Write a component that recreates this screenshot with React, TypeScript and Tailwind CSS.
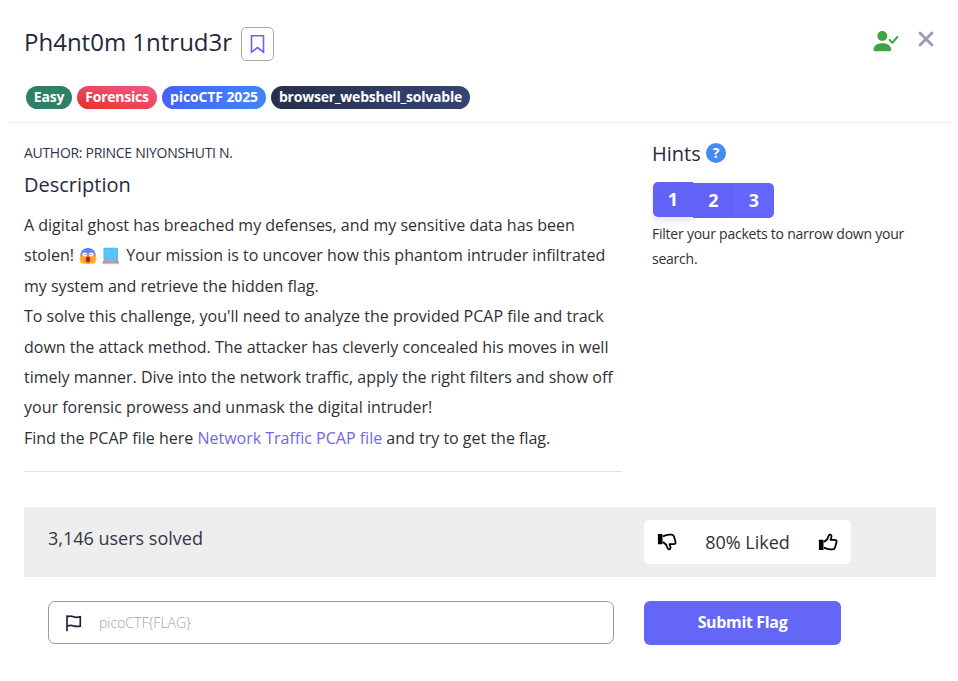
import React from "react";

function ScreamEmoji() {
  return (
    <svg className="ml-px mr-[4px] inline-block h-[18px] w-[18px] align-[-4px]" viewBox="0 0 19 18">
      <defs>
        <linearGradient id="scream" x1="0" y1="0" x2="0" y2="1">
          <stop offset="0.1" stopColor="#4f80f8" />
          <stop offset="0.36" stopColor="#8a9bd0" />
          <stop offset="0.54" stopColor="#fba52c" />
          <stop offset="1" stopColor="#fb9420" />
        </linearGradient>
      </defs>
      <circle cx="9.5" cy="9" r="8.4" fill="url(#scream)" />
      <circle cx="6" cy="7.4" r="2.2" fill="#fff" />
      <circle cx="13" cy="7.4" r="2.2" fill="#fff" />
      <circle cx="6.2" cy="7.4" r="0.6" fill="#6a5060" />
      <circle cx="12.8" cy="7.4" r="0.6" fill="#6a5060" />
      <ellipse cx="9.5" cy="12.5" rx="2.3" ry="3.1" fill="#b31d3c" />
      <path d="M0.6 11.2c.7-1 1.6-.5 2 .7l2.3 2.2c1 1.2.6 2.8-.8 3.3C2 17.500 .8 15.200 .6 11.200zM18.400 11.200c-.7-1-1.600-.5-2 .7l-2.300 2.200c-1 1.200-.6 2.800.8 3.300 2.100.1 3.300-2.200 3.500-6.200z" fill="#ffb22e" />
    </svg>
  );
}

function LaptopEmoji() {
  return (
    <svg className="mr-[2px] inline-block h-[18px] w-[19px] align-[-4px]" viewBox="0 0 19 18">
      <rect x="2.500" y="0.800" width="14.500" height="11.600" rx="1" fill="#50b8e8" />
      <rect x="3.300" y="1.600" width="13" height="10" fill="#56c5fa" />
      <path d="M3 12.300h13.600l1.400 3.900H1.400z" fill="#9a91a4" />
      <path d="M4 13.200h11.700l.4 1.200H3.500z" fill="#b9b3bd" />
      <rect x="1.200" y="15.800" width="17" height="1.500" rx=".7" fill="#c8c2cd" />
    </svg>
  );
}

function Thumb({ down = false }: { down?: boolean }) {
  return (
    <svg className={down ? "h-[18px] w-[20px] -scale-y-100" : "h-[18px] w-[20px]"} viewBox="0 0 20 18" fill="none">
      <rect x="0.900" y="6.800" width="4.600" height="10.100" rx=".5" fill="#000" />
      <path d="M6 9L9.200 6.200L10.800 2.500C11.400 1.100 13.700 1.500 13.500 3.300C13.400 4.600 13 5.600 12.500 6.800H16.600C18.300 6.800 18.900 8 18.500 9.200L17 14.400C16.600 15.800 15.900 16.300 14.700 16.300H12.200C9.600 16.300 8.200 15.800 6 14.600" stroke="#000" strokeWidth="1.800" strokeLinejoin="round" />
    </svg>
  );
}

function Header() {
  return (
    <header className="ml-[8px] mr-[6px] h-[123px] border-b border-[#ececee] pl-4 pr-[18px] pt-[27px]">
      <div className="flex h-[34px] items-start">
        <h1 className="-mt-px w-[217px] whitespace-nowrap text-[24px] leading-[32px] text-[#25253b]">Ph4nt0m 1ntrud3r</h1>
        <button aria-label="Bookmark" className="flex h-[34px] w-[33px] items-center justify-center rounded-[5px] border border-[#a9a9ad]">
          <svg width="15" height="20" viewBox="0 0 15 20" fill="none" stroke="#6464ed" strokeWidth="1.600"><path d="M1.500 1.800h12v16.400l-6-4.600-6 4.600z" /></svg>
        </button>
        <div className="ml-auto flex items-start">
          <svg className="mt-[4px]" width="26" height="21" viewBox="0 0 26 21" fill="#3fa541">
            <circle cx="9.300" cy="5" r="5" />
            <path d="M0.500 18.500c0-3.700 3.500-6.300 8.800-6.300s8.800 2.600 8.800 6.300c0 1.200-.4 1.700-1.500 1.700H2c-1.100 0-1.500-.5-1.500-1.700z" />
            <path d="M16.600 8.900l2.700 2.900 5-5.800" fill="none" stroke="#3fa541" strokeWidth="2" strokeLinecap="round" strokeLinejoin="round" />
          </svg>
          <svg className="ml-[19px] mt-[4px]" width="16" height="16" viewBox="0 0 16 16" stroke="#979bb5" strokeWidth="2.800" strokeLinecap="round"><path d="M2 2l12 12M14 2L2 14" /></svg>
        </div>
      </div>
      <div className="mt-[25px] flex gap-[5px] pl-[2px] text-[14px] font-bold leading-[22px] tracking-[-0.230px] text-white">
        <span className="h-[23px] w-[46px] rounded-full bg-[#2f8067] text-center">Easy</span>
        <span className="h-[23px] w-[80px] rounded-full bg-linear-to-tr from-[#e52d18] to-[#f2598b] text-center">Forensics</span>
        <span className="h-[23px] w-[104px] rounded-full bg-linear-to-r from-[#4661f8] to-[#4285f7] text-center tracking-[-0.130px]">picoCTF 2025</span>
        <span className="h-[23px] w-[199px] rounded-full bg-linear-to-r from-[#29304c] to-[#344474] text-center">browser_webshell_solvable</span>
      </div>
    </header>
  );
}

export default function App() {
  return (
    <div className="h-[681px] w-[958px] overflow-hidden bg-white font-['Open_Sans','Noto_Sans',sans-serif] text-[#2f2f35]">
      <Header />
      <main className="flex h-[384px] pl-6">
        <section className="w-[598px] shrink-0">
          <p className="pt-[20px] text-[14px] leading-[20px] tracking-[-0.300px] text-[#32324a]">AUTHOR: PRINCE NIYONSHUTI N.</p>
          <h2 className="mt-[7px] text-[20px] leading-[30px] text-[#29293f]">Description</h2>
          <div className="mt-[10px] whitespace-nowrap text-[16px] leading-[30.400px]">
            <p>A digital ghost has breached my defenses, and my sensitive data has been</p>
            <p>stolen! <ScreamEmoji /><LaptopEmoji /> Your mission is to uncover how this phantom intruder infiltrated</p>
            <p>my system and retrieve the hidden flag.</p>
            <p>To solve this challenge, you'll need to analyze the provided PCAP file and track</p>
            <p>down the attack method. The attacker has cleverly concealed his moves in well</p>
            <p>timely manner. Dive into the network traffic, apply the right filters and show off</p>
            <p>your forensic prowess and unmask the digital intruder!</p>
            <p>Find the PCAP file here <a className="text-[#6f68e8]">Network Traffic PCAP file</a> and try to get the flag.</p>
          </div>
          <hr className="mt-[18px] border-[#e4e4e7]" />
        </section>
        <aside className="ml-[30px] w-[290px]">
          <div className="flex h-[60px] items-center">
            <h2 className="w-[54px] pt-[2px] text-[20px] leading-[30px] text-[#29293f]">Hints</h2>
            <span className="flex size-5 items-center justify-center rounded-full bg-[#438cf5] text-[14px] font-bold leading-none text-white">?</span>
          </div>
          <div className="ml-px flex h-[36px] w-[121px] text-center text-[18px] font-bold text-white">
            <button className="-mt-px h-[35px] w-[40px] rounded-l-[5px] bg-[#6163f7] leading-[35px] shadow-[0_4px_6px_rgba(60,60,90,0.13)]">1</button>
            <button className="flex h-[35px] w-[41px] justify-center bg-[#6163f7] leading-[34px]">2</button>
            <button className="flex h-[35px] w-[40px] justify-center rounded-r-[5px] bg-[#6465fa] leading-[34px]">3</button>
          </div>
          <p className="mt-[2px] text-[14px] leading-[25px] tracking-[-0.230px]">Filter your packets to narrow down your<br />search.</p>
        </aside>
      </main>
      <section className="mx-6 mr-[22px] flex h-[70px] bg-[#eee]">
        <h2 className="w-[620px] pl-6 pt-[16px] text-[18px] leading-[30px] text-[#353548]">3,146 users solved</h2>
        <div className="mt-[13px] flex h-[44px] w-[207px] items-center justify-between rounded-[5px] bg-white pl-[13px] pr-[13px]">
          <Thumb down />
          <span className="text-[18px] leading-none">80% Liked</span>
          <Thumb />
        </div>
      </section>
      <form className="ml-[48px] mt-6 flex gap-[30px]">
        <label className="flex h-[43px] w-[566px] items-center rounded-[7px] border border-[#999a9e] pl-[17px]">
          <svg width="16" height="18" viewBox="0 0 16 18" fill="none" stroke="#22243a" strokeWidth="1.700"><path d="M1 1.200v16M1 2.800c3-1.100 4.600-.8 6.500 0 2.200.9 3.800.7 6.800.1v9.200c-3 .6-4.600.5-6.800-.2-2-.7-3.600-.7-6.500.2" /></svg>
          <input className="ml-[17px] w-[450px] text-[14px] font-light text-[#a0a0a4] outline-none placeholder:text-[#a0a0a4]" placeholder="picoCTF{FLAG}" />
        </label>
        <button type="button" className="h-[44px] w-[197px] rounded-[6px] bg-[#6366f7] pb-[2px] text-[16px] font-bold leading-[42px] tracking-[-0.350px] text-white">Submit Flag</button>
      </form>
    </div>
  );
}
